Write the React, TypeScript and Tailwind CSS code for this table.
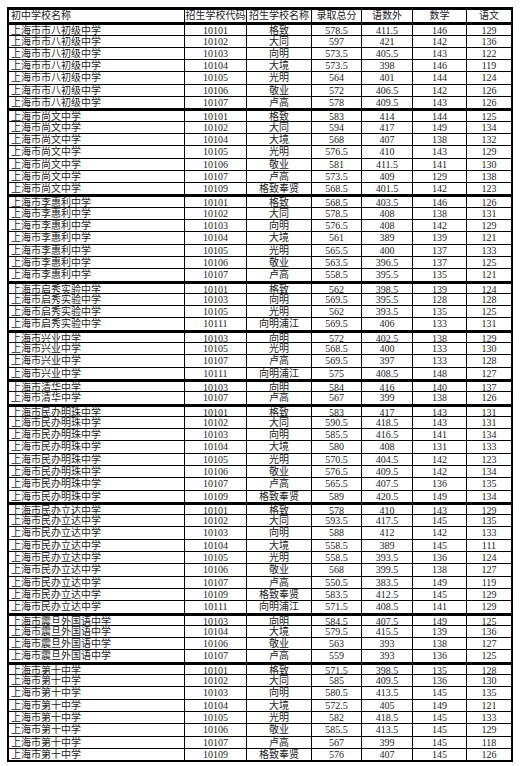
import React from 'react'

type Row = [string, string, string, string, string, string]

const groups: { name: string; rows: Row[] }[] = [
  {
    name: '上海市市八初级中学',
    rows: [
      ['10101', '格致', '578.5', '411.5', '146', '129'],
      ['10102', '大同', '597', '421', '142', '136'],
      ['10103', '向明', '573.5', '405.5', '143', '122'],
      ['10104', '大境', '573.5', '398', '146', '119'],
      ['10105', '光明', '564', '401', '144', '124'],
      ['10106', '敬业', '572', '406.5', '142', '126'],
      ['10107', '卢高', '578', '409.5', '143', '126'],
    ],
  },
  {
    name: '上海市尚文中学',
    rows: [
      ['10101', '格致', '583', '414', '144', '125'],
      ['10102', '大同', '594', '417', '149', '134'],
      ['10104', '大境', '568', '407', '138', '132'],
      ['10105', '光明', '576.5', '410', '143', '129'],
      ['10106', '敬业', '581', '411.5', '141', '130'],
      ['10107', '卢高', '573.5', '409', '129', '138'],
      ['10109', '格致奉贤', '568.5', '401.5', '142', '123'],
    ],
  },
  {
    name: '上海市李惠利中学',
    rows: [
      ['10101', '格致', '568.5', '403.5', '146', '126'],
      ['10102', '大同', '578.5', '408', '138', '131'],
      ['10103', '向明', '576.5', '408', '142', '129'],
      ['10104', '大境', '561', '389', '139', '121'],
      ['10105', '光明', '565.5', '400', '137', '133'],
      ['10106', '敬业', '563.5', '396.5', '137', '125'],
      ['10107', '卢高', '558.5', '395.5', '135', '121'],
    ],
  },
  {
    name: '上海市启秀实验中学',
    rows: [
      ['10101', '格致', '562', '398.5', '139', '124'],
      ['10103', '向明', '569.5', '395.5', '128', '128'],
      ['10105', '光明', '562', '393.5', '135', '125'],
      ['10111', '向明浦江', '569.5', '406', '133', '131'],
    ],
  },
  {
    name: '上海市兴业中学',
    rows: [
      ['10103', '向明', '572', '402.5', '138', '129'],
      ['10105', '光明', '568.5', '400', '133', '130'],
      ['10107', '卢高', '569.5', '397', '133', '128'],
      ['10111', '向明浦江', '575', '408.5', '148', '127'],
    ],
  },
  {
    name: '上海市清华中学',
    rows: [
      ['10103', '向明', '584', '416', '140', '137'],
      ['10107', '卢高', '567', '399', '138', '126'],
    ],
  },
  {
    name: '上海市民办明珠中学',
    rows: [
      ['10101', '格致', '583', '417', '143', '131'],
      ['10102', '大同', '590.5', '418.5', '143', '131'],
      ['10103', '向明', '585.5', '416.5', '141', '134'],
      ['10104', '大境', '580', '408', '131', '133'],
      ['10105', '光明', '570.5', '404.5', '142', '123'],
      ['10106', '敬业', '576.5', '409.5', '142', '134'],
      ['10107', '卢高', '565.5', '407.5', '136', '135'],
      ['10109', '格致奉贤', '589', '420.5', '149', '134'],
    ],
  },
  {
    name: '上海市民办立达中学',
    rows: [
      ['10101', '格致', '578', '410', '143', '129'],
      ['10102', '大同', '593.5', '417.5', '145', '135'],
      ['10103', '向明', '588', '412', '142', '133'],
      ['10104', '大境', '558.5', '389', '145', '111'],
      ['10105', '光明', '558.5', '393.5', '136', '124'],
      ['10106', '敬业', '568', '399.5', '138', '127'],
      ['10107', '卢高', '550.5', '383.5', '149', '119'],
      ['10109', '格致奉贤', '583.5', '412.5', '145', '129'],
      ['10111', '向明浦江', '571.5', '408.5', '141', '129'],
    ],
  },
  {
    name: '上海市震旦外国语中学',
    rows: [
      ['10103', '向明', '584.5', '407.5', '149', '125'],
      ['10104', '大境', '579.5', '415.5', '139', '136'],
      ['10106', '敬业', '563', '393', '138', '127'],
      ['10107', '卢高', '559', '393', '136', '125'],
    ],
  },
  {
    name: '上海市第十中学',
    rows: [
      ['10101', '格致', '571.5', '398.5', '135', '128'],
      ['10102', '大同', '585', '409.5', '136', '130'],
      ['10103', '向明', '580.5', '413.5', '145', '135'],
      ['10104', '大境', '572.5', '405', '149', '121'],
      ['10105', '光明', '582', '418.5', '145', '133'],
      ['10106', '敬业', '585.5', '413.5', '145', '129'],
      ['10107', '卢高', '567', '399', '145', '118'],
      ['10109', '格致奉贤', '576', '407', '145', '126'],
    ],
  },
]

const cols = 'grid grid-cols-[175px_62px_65px_50px_51px_54px_1fr] h-[12.3px]'
const cell = 'border-l border-black flex items-center justify-center whitespace-nowrap'

function Line({ first, thick, cells }: { first: string; thick?: boolean; cells: string[] }) {
  return (
    <div className={`${cols} ${thick ? 'border-t-[3px]' : 'border-t'} border-black`}>
      <div className="pl-[2px] flex items-center whitespace-nowrap">{first}</div>
      {cells.map((c, i) => (
        <div key={i} className={cell}>
          {c}
        </div>
      ))}
    </div>
  )
}

export default function App() {
  return (
    <div className="w-[525px] h-[766px] bg-white pt-[7px] pl-[7px] overflow-hidden">
      <div
        className="w-[506px] border-2 border-t-[3px] border-black text-[10px] leading-[12px] text-[#1c1c1c]"
        style={{ fontFamily: '"Liberation Serif", "Noto Sans CJK SC", serif' }}
      >
        <div className={cols}>
          <div className="pl-[2px] flex items-center whitespace-nowrap">初中学校名称</div>
          {['招生学校代码', '招生学校名称', '录取总分', '语数外', '数学', '语文'].map((h) => (
            <div key={h} className={cell}>
              {h}
            </div>
          ))}
        </div>
        {groups.map((g) =>
          g.rows.map((r, i) => <Line key={g.name + r[0]} first={g.name} thick={i === 0} cells={r} />),
        )}
      </div>
    </div>
  )
}
